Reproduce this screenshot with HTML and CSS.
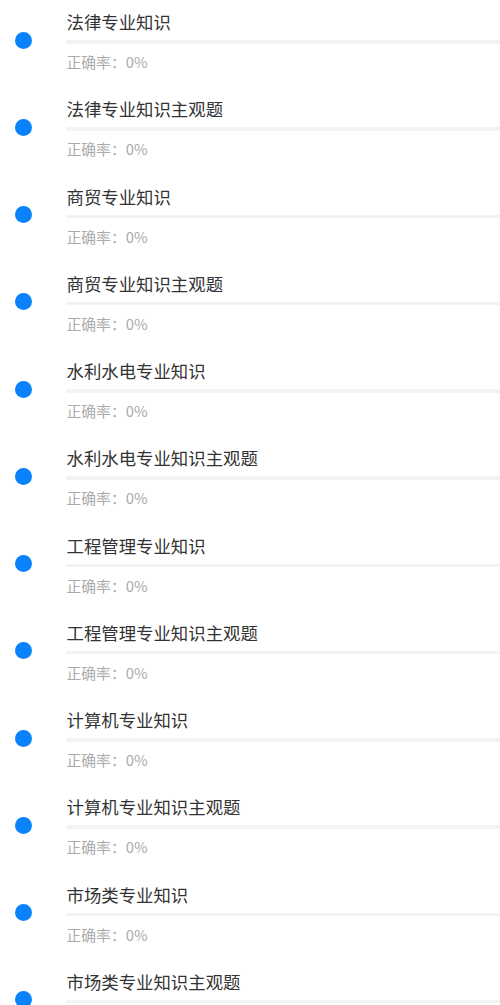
FILE: index.html
```
<!DOCTYPE html>
<html lang="zh">
<head>
<meta charset="utf-8">
<link rel="stylesheet" href="styles.css">
</head>
<body>
<ul class="list">
  <li class="row"><span class="dot"></span><div class="body"><div class="title">法律专业知识</div><div class="bar"></div><div class="rate">正确率：0%</div></div></li>
  <li class="row"><span class="dot"></span><div class="body"><div class="title">法律专业知识主观题</div><div class="bar"></div><div class="rate">正确率：0%</div></div></li>
  <li class="row"><span class="dot"></span><div class="body"><div class="title">商贸专业知识</div><div class="bar"></div><div class="rate">正确率：0%</div></div></li>
  <li class="row"><span class="dot"></span><div class="body"><div class="title">商贸专业知识主观题</div><div class="bar"></div><div class="rate">正确率：0%</div></div></li>
  <li class="row"><span class="dot"></span><div class="body"><div class="title">水利水电专业知识</div><div class="bar"></div><div class="rate">正确率：0%</div></div></li>
  <li class="row"><span class="dot"></span><div class="body"><div class="title">水利水电专业知识主观题</div><div class="bar"></div><div class="rate">正确率：0%</div></div></li>
  <li class="row"><span class="dot"></span><div class="body"><div class="title">工程管理专业知识</div><div class="bar"></div><div class="rate">正确率：0%</div></div></li>
  <li class="row"><span class="dot"></span><div class="body"><div class="title">工程管理专业知识主观题</div><div class="bar"></div><div class="rate">正确率：0%</div></div></li>
  <li class="row"><span class="dot"></span><div class="body"><div class="title">计算机专业知识</div><div class="bar"></div><div class="rate">正确率：0%</div></div></li>
  <li class="row"><span class="dot"></span><div class="body"><div class="title">计算机专业知识主观题</div><div class="bar"></div><div class="rate">正确率：0%</div></div></li>
  <li class="row"><span class="dot"></span><div class="body"><div class="title">市场类专业知识</div><div class="bar"></div><div class="rate">正确率：0%</div></div></li>
  <li class="row"><span class="dot"></span><div class="body"><div class="title">市场类专业知识主观题</div><div class="bar"></div><div class="rate">正确率：0%</div></div></li>
</ul>
</body>
</html>
```
FILE: styles.css
```
html, body {
  margin: 0;
  padding: 0;
  background: #ffffff;
  overflow: hidden;
  height: 1005px;
}
body {
  font-family: "Noto Sans CJK SC", "Noto Sans", sans-serif;
}
.list {
  list-style: none;
  margin: 0;
  padding: 0;
}
.row {
  display: flex;
  align-items: flex-start;
  height: 87.27px;
  box-sizing: border-box;
  padding-top: 10px;
}
.dot {
  flex: none;
  width: 17px;
  height: 17px;
  border-radius: 50%;
  background: #0a82fb;
  margin-left: 15px;
  margin-top: 21.5px;
  margin-right: 34px;
}
.body {
  flex: 1;
  display: flex;
  flex-direction: column;
}
.title {
  font-size: 17.4px;
  line-height: 24px;
  color: #333333;
  padding-left: 0.5px;
}
.bar {
  height: 3.5px;
  margin-top: 6px;
  background: #f3f3f3;
  border-radius: 2px 0 0 2px;
}
.rate {
  font-size: 14.8px;
  line-height: 20px;
  margin-top: 8.5px;
  color: #ababab;
  padding-left: 0.5px;
}
```
